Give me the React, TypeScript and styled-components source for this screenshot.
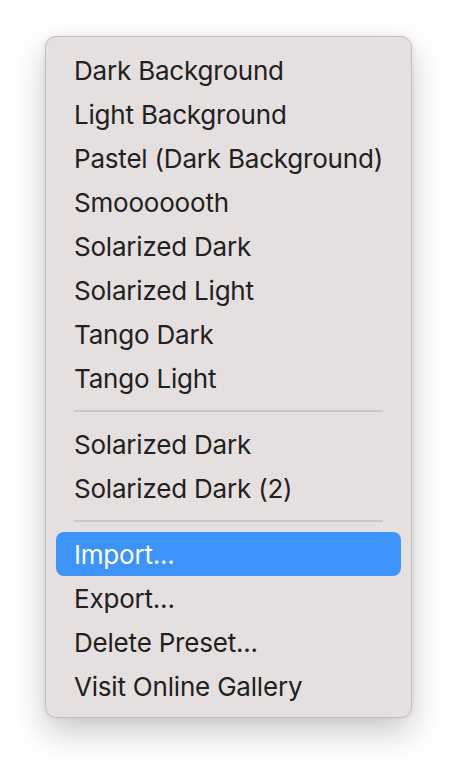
import React from 'react'
import styled, { createGlobalStyle } from 'styled-components'

const GlobalStyle = createGlobalStyle`
  html, body {
    margin: 0;
    padding: 0;
    background: #ffffff;
  }
  * {
    box-sizing: border-box;
  }
`

const Page = styled.div`
  width: 458px;
  height: 772px;
  padding: 36px 0 0 45px;
`

const Menu = styled.div`
  width: 367px;
  display: flex;
  flex-direction: column;
  padding: 11px 10px 9px 10px;
  background: #e6dfe0;
  border: 1px solid #c4bfbf;
  border-radius: 11px;
  box-shadow: 0 14px 34px rgba(0, 0, 0, 0.22), 0 0 6px rgba(0, 0, 0, 0.08);
  font-family: Inter, 'Noto Sans', sans-serif;
`

const Item = styled.div<{ $active?: boolean }>`
  height: 44px;
  display: flex;
  align-items: center;
  padding-left: 18px;
  border-radius: 8px;
  font-size: 26px;
  letter-spacing: -0.2px;
  color: ${(p) => (p.$active ? '#ffffff' : '#212121')};
  background: ${(p) => (p.$active ? '#3d93f8' : 'transparent')};
  white-space: nowrap;
`

const Separator = styled.div`
  height: 2px;
  margin: 10px 18px;
  background: #cdc5c6;
`

const presets = [
  'Dark Background',
  'Light Background',
  'Pastel (Dark Background)',
  'Smooooooth',
  'Solarized Dark',
  'Solarized Light',
  'Tango Dark',
  'Tango Light',
]

const custom = ['Solarized Dark', 'Solarized Dark (2)']

const actions = ['Import...', 'Export...', 'Delete Preset...', 'Visit Online Gallery']

export default function App() {
  return (
    <Page>
      <GlobalStyle />
      <Menu>
        {presets.map((label, i) => (
          <Item key={'p' + i}>{label}</Item>
        ))}
        <Separator />
        {custom.map((label, i) => (
          <Item key={'c' + i}>{label}</Item>
        ))}
        <Separator />
        {actions.map((label, i) => (
          <Item key={'a' + i} $active={i === 0}>
            {label}
          </Item>
        ))}
      </Menu>
    </Page>
  )
}
